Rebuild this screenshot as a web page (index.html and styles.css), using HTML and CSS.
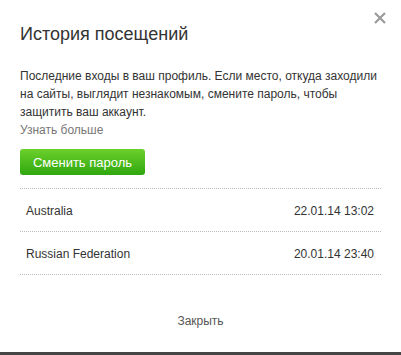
FILE: index.html
```html
<!DOCTYPE html>
<html lang="ru">
<head>
  <meta charset="UTF-8" />
  <title>История посещений</title>
  <link rel="stylesheet" href="styles.css">
</head>
<body>
  <div class="dialog">
    <a class="close" href="#" title="Закрыть">
      <svg width="12" height="12" viewBox="0 0 12 12">
        <path d="M1 1 L11 11 M11 1 L1 11" stroke="#9a9a9a" stroke-width="2.2" />
      </svg>
    </a>

    <h1 class="title">История посещений</h1>

    <p class="info">
      Последние входы в ваш профиль. Если место, откуда заходили на сайты, выглядит незнакомым, смените пароль, чтобы защитить ваш аккаунт.
      <br><a class="more" href="#">Узнать больше</a>
    </p>

    <button type="button" class="btn">Сменить пароль</button>

    <div class="visits">
      <div class="row">
        <span>Australia</span>
        <span>22.01.14 13:02</span>
      </div>
      <div class="row">
        <span>Russian Federation</span>
        <span>20.01.14 23:40</span>
      </div>
    </div>

    <div class="footer">
      <a class="close-link" href="#">Закрыть</a>
    </div>
  </div>
</body>
</html>
```

FILE: styles.css
```css
body {
  margin: 0;
  background-color: #454545;
  font-family: "Liberation Sans", Arial, sans-serif;
  color: #333;
}

a {
  text-decoration: none;
}

.dialog {
  position: relative;
  height: 352px;
  box-sizing: border-box;
  padding: 23px 20px 0 20px;
  background-color: #fff;
  display: flex;
  flex-direction: column;
}

.close {
  position: absolute;
  top: 12px;
  right: 15px;
  display: block;
  line-height: 0;
}

.title {
  margin: 0;
  font-size: 18px;
  line-height: 22px;
  font-weight: normal;
  color: #333;
}

.info {
  margin: 22px 0 0 0;
  font-size: 12px;
  line-height: 18px;
}

.more {
  color: #777;
}

.btn {
  align-self: flex-start;
  margin-top: 10px;
  width: 125px;
  height: 26px;
  padding: 0;
  border: none;
  border-radius: 3px;
  background: linear-gradient(#6cd02c, #2fa70e);
  color: #fff;
  font-family: inherit;
  font-size: 13px;
}

.visits {
  margin-top: 13px;
  border-top: 1px dotted #bbb;
}

.row {
  display: flex;
  justify-content: space-between;
  padding: 13px 7px 11px 6px;
  font-size: 12px;
  line-height: 18px;
  border-bottom: 1px dotted #bbb;
}

.footer {
  margin-top: 37px;
  text-align: center;
  font-size: 12px;
  line-height: 18px;
}

.close-link {
  color: #555;
}
```
